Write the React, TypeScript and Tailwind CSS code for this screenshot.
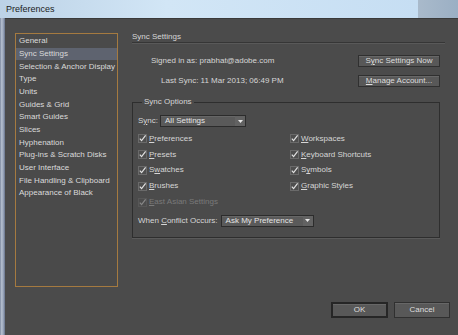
import React from 'react';

const categories = [
    'General',
    'Sync Settings',
    'Selection & Anchor Display',
    'Type',
    'Units',
    'Guides & Grid',
    'Smart Guides',
    'Slices',
    'Hyphenation',
    'Plug-ins & Scratch Disks',
    'User Interface',
    'File Handling & Clipboard',
    'Appearance of Black',
];

function Mnemonic({ text, at = 0 }: { text: string; at?: number }) {
    return (
        <span>
            {text.slice(0, at)}
            <span className="underline underline-offset-[1px]">{text[at]}</span>
            {text.slice(at + 1)}
        </span>
    );
}

function CheckBox({ disabled }: { disabled?: boolean }) {
    return (
        <svg width="9" height="9" viewBox="0 0 9 9" className={disabled ? 'opacity-40' : ''}>
            <rect x="0.5" y="0.5" width="8" height="8" fill="#4e4e4e" stroke="#6a6a6a" />
            <path d="M1.8 4.6 L3.6 6.6 L7.6 1.4" fill="none" stroke="#e2e2e2" strokeWidth="1.2" />
        </svg>
    );
}

function Check({ label, at = 0, disabled }: { label: string; at?: number; disabled?: boolean }) {
    return (
        <div className={`flex items-center gap-[2px] h-[15.8px] ${disabled ? 'text-[#7a7a7a]' : ''}`}>
            <CheckBox disabled={disabled} />
            <Mnemonic text={label} at={at} />
        </div>
    );
}

function Dropdown({ value, width }: { value: string; width: string }) {
    return (
        <div className={`${width} h-[12px] flex items-stretch bg-[#5a5a5a] border border-[#2c2c2c] shadow-[inset_0_1px_0_#666]`}>
            <span className="flex-1 pl-[4px] leading-[10px] text-[#e4e4e4]">{value}</span>
            <span className="w-[10px] flex items-center justify-center bg-[#626262]">
                <svg width="5" height="3" viewBox="0 0 5 3">
                    <path d="M0 0 H5 L2.5 3 Z" fill="#e8e8e8" />
                </svg>
            </span>
        </div>
    );
}

function Button({ children, primary, width }: { children: React.ReactNode; primary?: boolean; width: string }) {
    return (
        <button
            className={`${width} flex items-center justify-center bg-[#585858] text-[#dedede] shadow-[inset_0_1px_0_#676767] ${
                primary ? 'h-[16px] border-2 border-[#262626]' : 'border border-[#303030]'
            }`}
        >
            {children}
        </button>
    );
}

export default function App() {
    return (
        <div className="w-[458px] h-[335px] flex flex-col overflow-hidden text-[8px] leading-[10px] text-[#d6d6d6] font-['Liberation_Sans',Arial,sans-serif]">
            {/* title bar */}
            <div className="h-[18px] flex shrink-0">
                <div className="flex-1 flex items-center pl-[6px] bg-[linear-gradient(to_right,#bcd2e6,#d2e6f6_40%,#c6def3)] text-[9px] text-[#1c1c1c]">
                    Preferences
                </div>
                <div className="w-[40px] bg-[linear-gradient(to_right,#a9bacb,#9bafc4)]" />
            </div>

            <div className="flex-1 flex">
                <div className="w-[5px] bg-[linear-gradient(to_right,#7b889e,#b6c0d0,#97a3b8,#66728a)]" />

                <div className="flex-1 flex flex-col bg-[#4b4b4b] border-t border-[#3a3a3a]">
                    <div className="flex items-start pt-[12px] pl-[10px]">
                        {/* category list */}
                        <div className="w-[103px] h-[254px] mt-[2px] border border-[#a57a40] bg-[#4a4a4a] pt-[1px]">
                            {categories.map((c) => (
                                <div
                                    key={c}
                                    className={`h-[12.67px] flex items-center pl-[3px] text-[#dadada] ${
                                        c === 'Sync Settings' ? 'bg-[#5e636f]' : ''
                                    }`}
                                >
                                    {c}
                                </div>
                            ))}
                        </div>

                        {/* sync settings pane */}
                        <div className="w-[313px] ml-[14px] flex flex-col">
                            <div className="h-[12px] flex items-center border-b border-[#363636] shadow-[0_1px_0_#595959]">
                                Sync Settings
                            </div>

                            <div className="flex items-center justify-between mt-[12px] pr-[5px]">
                                <span className="pl-[19px]">Signed in as: prabhat@adobe.com</span>
                                <Button width="w-[82px] h-[12px]">
                                    <Mnemonic text="Sync Settings Now" at={1} />
                                </Button>
                            </div>
                            <div className="flex items-center justify-between mt-[8px] pr-[5px]">
                                <span className="pl-[29px]">Last Sync: 11 Mar 2013; 06:49 PM</span>
                                <Button width="w-[82px] h-[12px]">
                                    <Mnemonic text="Manage Account..." />
                                </Button>
                            </div>

                            <fieldset className="mt-[10px] mr-[5px] border border-[#2e2e2e] shadow-[0_1px_0_#5a5a5a] px-[5px] pb-[10px]">
                                <legend className="ml-[4px] px-[2px]">Sync Options</legend>
                                <div className="flex items-center gap-[2px] mt-[8px]">
                                    <Mnemonic text="Sync:" at={1} />
                                    <Dropdown value="All Settings" width="w-[86px]" />
                                </div>
                                <div className="grid grid-cols-[152px_1fr] mt-[4px]">
                                    <div className="flex flex-col">
                                        <Check label="Preferences" />
                                        <Check label="Presets" />
                                        <Check label="Swatches" at={1} />
                                        <Check label="Brushes" />
                                        <Check label="East Asian Settings" disabled />
                                    </div>
                                    <div className="flex flex-col">
                                        <Check label="Workspaces" />
                                        <Check label="Keyboard Shortcuts" />
                                        <Check label="Symbols" at={1} />
                                        <Check label="Graphic Styles" />
                                    </div>
                                </div>
                                <div className="flex items-center gap-[3px] mt-[5px]">
                                    <span>
                                        When <Mnemonic text="Conflict" /> Occurs:
                                    </span>
                                    <Dropdown value="Ask My Preference" width="w-[93px]" />
                                </div>
                            </fieldset>
                        </div>
                    </div>

                    {/* dialog buttons */}
                    <div className="flex justify-end gap-[6px] mt-[15px] pr-[8px]">
                        <Button primary width="w-[57px]">OK</Button>
                        <Button width="w-[56px] h-[16px]">Cancel</Button>
                    </div>
                </div>
            </div>
        </div>
    );
}
